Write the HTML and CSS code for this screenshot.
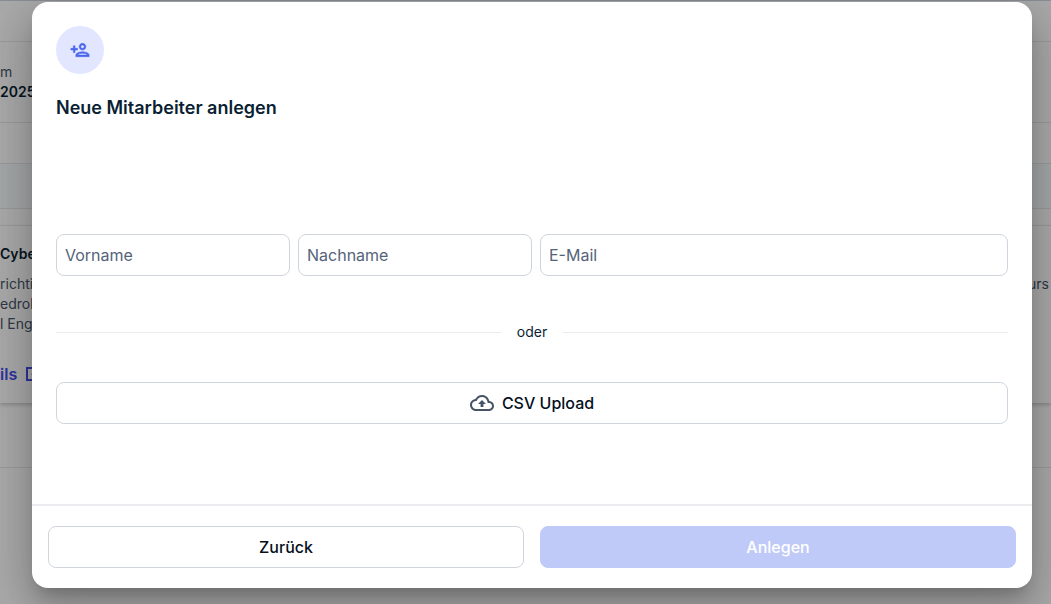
FILE: index.html
```html
<!DOCTYPE html>
<html lang="de">
<head>
    <meta charset="UTF-8">
    <meta name="viewport" content="width=device-width, initial-scale=1.0">
    <title>Neue Mitarbeiter anlegen</title>
    <link rel="stylesheet" href="styles.css">
</head>
<body>
    <!-- Page behind the dialog -->
    <div class="page">
        <div class="topbar"></div>
        <div class="stats">
            <p>m</p>
            <p class="date">2025</p>
        </div>
        <div class="tabs"></div>
        <div class="notice"></div>
        <div class="spacer"></div>
        <div class="course">
            <div>
                <h2>Cybe</h2>
                <p>richtig</p>
                <p>edroh</p>
                <p>l Eng</p>
                <a href="#">ils
                    <svg width="16" height="16" viewBox="0 0 16 16"><path d="M7 2H2v12h12V9M9 2h5v5M14 2L7 9" fill="none" stroke="currentColor" stroke-width="2"/></svg>
                </a>
            </div>
            <p class="course-end">urs</p>
        </div>
        <div class="page-foot"></div>
    </div>

    <!-- Dialog -->
    <div class="overlay">
        <form class="dialog" role="dialog" aria-labelledby="dialog-title">
            <div class="dialog-body">
                <div class="badge">
                    <svg width="20" height="20" viewBox="0 0 24 24" fill="currentColor" stroke="currentColor" stroke-width=".6"><path d="M15 12c2.210 0 4-1.790 4-4s-1.790-4-4-4-4 1.790-4 4 1.790 4 4 4zm0-6c1.100 0 2 .9 2 2s-.9 2-2 2-2-.9-2-2 .9-2 2-2zm0 8c-2.670 0-8 1.340-8 4v2h16v-2c0-2.660-5.330-4-8-4zm-6 4c.22-.72 3.310-2 6-2 2.700 0 5.800 1.290 6 2H9zm-3-3v-3h3v-2H6V7H4v3H1v2h3v3z"/></svg>
                </div>
                <h1 id="dialog-title">Neue Mitarbeiter anlegen</h1>

                <div class="fields">
                    <input type="text" name="vorname" placeholder="Vorname" aria-label="Vorname">
                    <input type="text" name="nachname" placeholder="Nachname" aria-label="Nachname">
                    <input type="email" name="email" placeholder="E-Mail" aria-label="E-Mail">
                </div>

                <div class="divider">oder</div>

                <button type="button" class="btn btn-upload">
                    <svg width="24" height="24" viewBox="0 0 24 24" fill="currentColor"><path d="M19.350 10.040C18.670 6.590 15.640 4 12 4 9.110 4 6.600 5.640 5.350 8.040 2.340 8.360 0 10.910 0 14c0 3.310 2.690 6 6 6h13c2.760 0 5-2.240 5-5 0-2.640-2.050-4.780-4.650-4.960zM19 18H6c-2.210 0-4-1.790-4-4 0-2.050 1.530-3.760 3.560-3.970l1.070-.11.5-.95C8.080 7.140 9.940 6 12 6c2.620 0 4.880 1.860 5.390 4.430l.3 1.500 1.530.11c1.560.1 2.780 1.410 2.780 2.960 0 1.650-1.350 3-3 3zM8 13h2.550v3h2.900v-3H16l-4-4z"/></svg>
                    CSV Upload
                </button>
            </div>

            <div class="dialog-footer">
                <button type="button" class="btn">Zurück</button>
                <button type="submit" class="btn btn-primary" disabled>Anlegen</button>
            </div>
        </form>
    </div>
</body>
</html>
```

FILE: styles.css
```css
* {
    box-sizing: border-box;
}
body {
    margin: 0;
    font-family: Inter, "Liberation Sans", sans-serif;
    color: #0a1f33;
    overflow: hidden;
}
h1, h2, p {
    margin: 0;
}

/* Page behind the dialog */
.page {
    min-height: 100vh;
    background-color: #fafafa;
    font-size: 14px;
    line-height: 20px;
    color: #475467;
    border-top: 1px solid #cbd0dc;
}
.topbar {
    height: 41px;
    border-bottom: 1px solid #e4e4e7;
}
.stats {
    height: 81px;
    padding-top: 20px;
    border-bottom: 1px solid #e4e4e7;
}
.stats .date {
    font-weight: 600;
    color: #0a1f33;
}
.tabs {
    height: 41px;
    border-bottom: 1px solid #e4e4e7;
}
.notice {
    height: 45px;
    background-color: #f2f7f6;
    border-bottom: 1px solid #dfe4e4;
}
.spacer {
    height: 16px;
}
.course {
    display: flex;
    justify-content: space-between;
    height: 178px;
    padding: 18px 2px 0 0;
    border-top: 1px solid #e4e4e7;
    box-shadow: 0 2px 4px rgba(0, 0, 0, 0.2);
}
.course h2 {
    margin-bottom: 10px;
    font-size: 14px;
    font-weight: 600;
    line-height: 20px;
    color: #0a1f33;
}
.course a {
    display: flex;
    align-items: center;
    gap: 8px;
    margin-top: 30px;
    font-size: 16px;
    font-weight: 600;
    color: #444ce7;
    text-decoration: none;
}
.course-end {
    padding-top: 30px;
}
.page-foot {
    height: 65px;
    border-bottom: 1px solid #e4e4e7;
}

/* Dialog */
.overlay {
    position: absolute;
    inset: 0;
    display: flex;
    padding: 2px 19px 16px 32px;
    background-color: rgba(0, 0, 0, 0.32);
}
.dialog {
    display: flex;
    flex-direction: column;
    flex: 1;
    background-color: #fff;
    border-radius: 16px;
    box-shadow: 0 11px 15px -7px rgba(0, 0, 0, 0.2),
        0 24px 38px 3px rgba(0, 0, 0, 0.14),
        0 9px 46px 8px rgba(0, 0, 0, 0.12);
}
.dialog-body {
    flex: 1;
    padding: 24px;
}
.badge {
    display: flex;
    align-items: center;
    justify-content: center;
    width: 48px;
    height: 48px;
    border-radius: 50%;
    background-color: #e2e7ff;
    color: #4a64ec;
}
h1 {
    margin-top: 20px;
    font-size: 18px;
    font-weight: 600;
    line-height: 28px;
}
.fields {
    display: grid;
    grid-template-columns: 1fr 1fr 2fr;
    gap: 8px;
    margin-top: 112px;
}
.fields input {
    min-width: 0;
    height: 42px;
    padding: 0 8px;
    border: 1px solid #d0d5dd;
    border-radius: 8px;
    font: inherit;
    font-size: 16px;
    color: #0a1f33;
}
.fields input::placeholder {
    color: #54637a;
}
.divider {
    display: flex;
    align-items: center;
    gap: 16px;
    margin: 46px 0 40px;
    font-size: 14px;
    line-height: 20px;
}
.divider::before,
.divider::after {
    content: "";
    flex: 1;
    border-top: 1px solid #ebecf0;
}
.btn {
    display: flex;
    align-items: center;
    justify-content: center;
    gap: 8px;
    width: 100%;
    height: 42px;
    border: 1px solid #d0d5dd;
    border-radius: 8px;
    background-color: #fff;
    font: inherit;
    font-size: 16px;
    font-weight: 500;
    color: #05101c;
    cursor: pointer;
}
.btn-upload svg {
    color: #475467;
}
.btn-primary {
    border-color: #c0caf9;
    background-color: #c0caf9;
    color: #fff;
    cursor: default;
}
.dialog-footer {
    display: grid;
    grid-template-columns: 1fr 1fr;
    gap: 16px;
    padding: 20px 16px;
    border-top: 2px solid #ebecf0;
}
```
